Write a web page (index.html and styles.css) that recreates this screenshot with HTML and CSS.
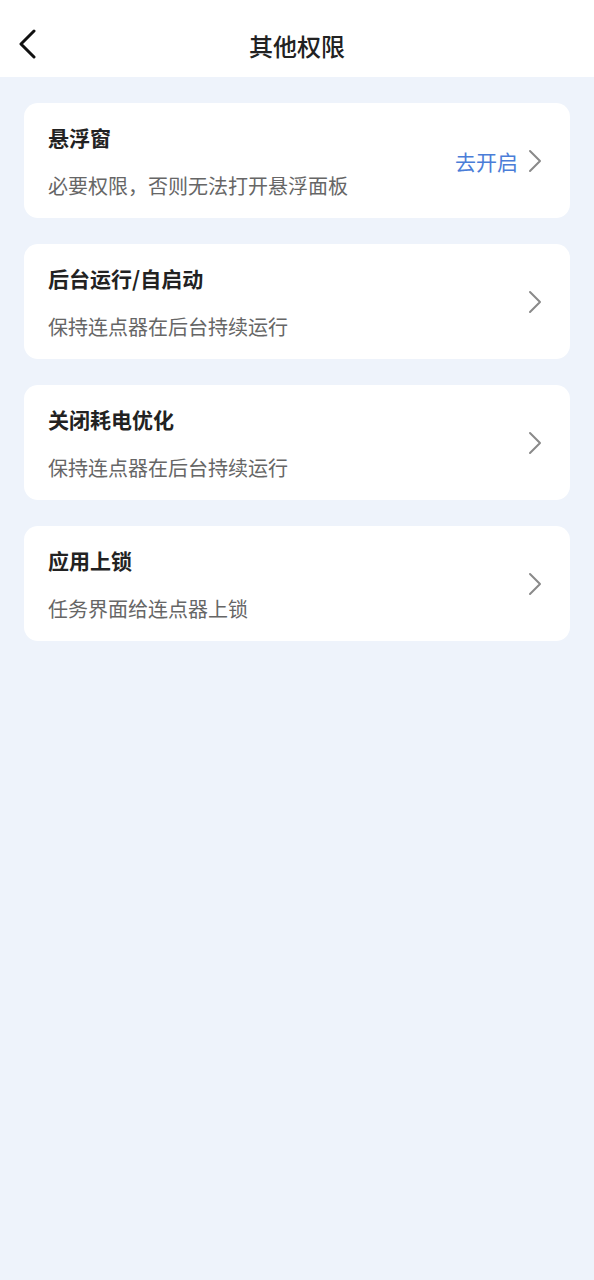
FILE: index.html
```html
<!DOCTYPE html>
<html lang="zh-CN">
<head>
    <meta charset="UTF-8">
    <meta name="viewport" content="width=device-width, initial-scale=1.0">
    <title>其他权限</title>
    <link rel="stylesheet" href="styles.css">
</head>
<body>

    <!-- Top bar -->
    <header class="topbar">
        <button class="back" type="button" aria-label="返回">
            <svg width="22" height="30" viewBox="0 0 22 30">
                <path d="M17 2 L4 15 L17 28" fill="none" stroke="#111" stroke-width="3" stroke-linecap="round" stroke-linejoin="round"/>
            </svg>
        </button>
        <h1>其他权限</h1>
    </header>

    <main class="list">
        <div class="card">
            <div class="card-text">
                <div class="card-title">悬浮窗</div>
                <div class="card-desc">必要权限，否则无法打开悬浮面板</div>
            </div>
            <span class="action">去开启</span>
            <svg class="arrow" width="14" height="24" viewBox="0 0 14 24">
                <path d="M2 2 L12 12 L2 22" fill="none" stroke="#8a8a8a" stroke-width="2" stroke-linecap="round" stroke-linejoin="round"/>
            </svg>
        </div>

        <div class="card">
            <div class="card-text">
                <div class="card-title">后台运行/自启动</div>
                <div class="card-desc">保持连点器在后台持续运行</div>
            </div>
            <svg class="arrow" width="14" height="24" viewBox="0 0 14 24">
                <path d="M2 2 L12 12 L2 22" fill="none" stroke="#8a8a8a" stroke-width="2" stroke-linecap="round" stroke-linejoin="round"/>
            </svg>
        </div>

        <div class="card">
            <div class="card-text">
                <div class="card-title">关闭耗电优化</div>
                <div class="card-desc">保持连点器在后台持续运行</div>
            </div>
            <svg class="arrow" width="14" height="24" viewBox="0 0 14 24">
                <path d="M2 2 L12 12 L2 22" fill="none" stroke="#8a8a8a" stroke-width="2" stroke-linecap="round" stroke-linejoin="round"/>
            </svg>
        </div>

        <div class="card">
            <div class="card-text">
                <div class="card-title">应用上锁</div>
                <div class="card-desc">任务界面给连点器上锁</div>
            </div>
            <svg class="arrow" width="14" height="24" viewBox="0 0 14 24">
                <path d="M2 2 L12 12 L2 22" fill="none" stroke="#8a8a8a" stroke-width="2" stroke-linecap="round" stroke-linejoin="round"/>
            </svg>
        </div>
    </main>

</body>
</html>
```

FILE: styles.css
```css
/* Base */
* {
    box-sizing: border-box;
    margin: 0;
    padding: 0;
}
body {
    font-family: "Noto Sans CJK SC", "Noto Sans", sans-serif;
    background-color: #eef3fb;
    min-height: 100vh;
}

/* Top bar */
.topbar {
    position: relative;
    height: 77px;
    background-color: #ffffff;
    display: flex;
    align-items: center;
    justify-content: center;
}
.topbar h1 {
    font-size: 24px;
    font-weight: 500;
    color: #222;
    margin-top: 13px;
}
.back {
    position: absolute;
    left: 17px;
    top: 29px;
    border: none;
    background: none;
    display: flex;
}

/* Card list */
.list {
    padding: 26px 24px;
    display: flex;
    flex-direction: column;
    gap: 26px;
}
.card {
    height: 115px;
    background-color: #ffffff;
    border-radius: 14px;
    padding: 0 28px 0 24px;
    display: flex;
    align-items: center;
}
.card-text {
    flex: 1;
}
.card-title {
    font-size: 21px;
    font-weight: 700;
    color: #222;
    line-height: 30px;
}
.card-desc {
    font-size: 20px;
    color: #666;
    line-height: 28px;
    margin-top: 20px;
}
.action {
    font-size: 21px;
    color: #4a7dd8;
    margin-right: 10px;
}
.arrow {
    flex-shrink: 0;
}
```
